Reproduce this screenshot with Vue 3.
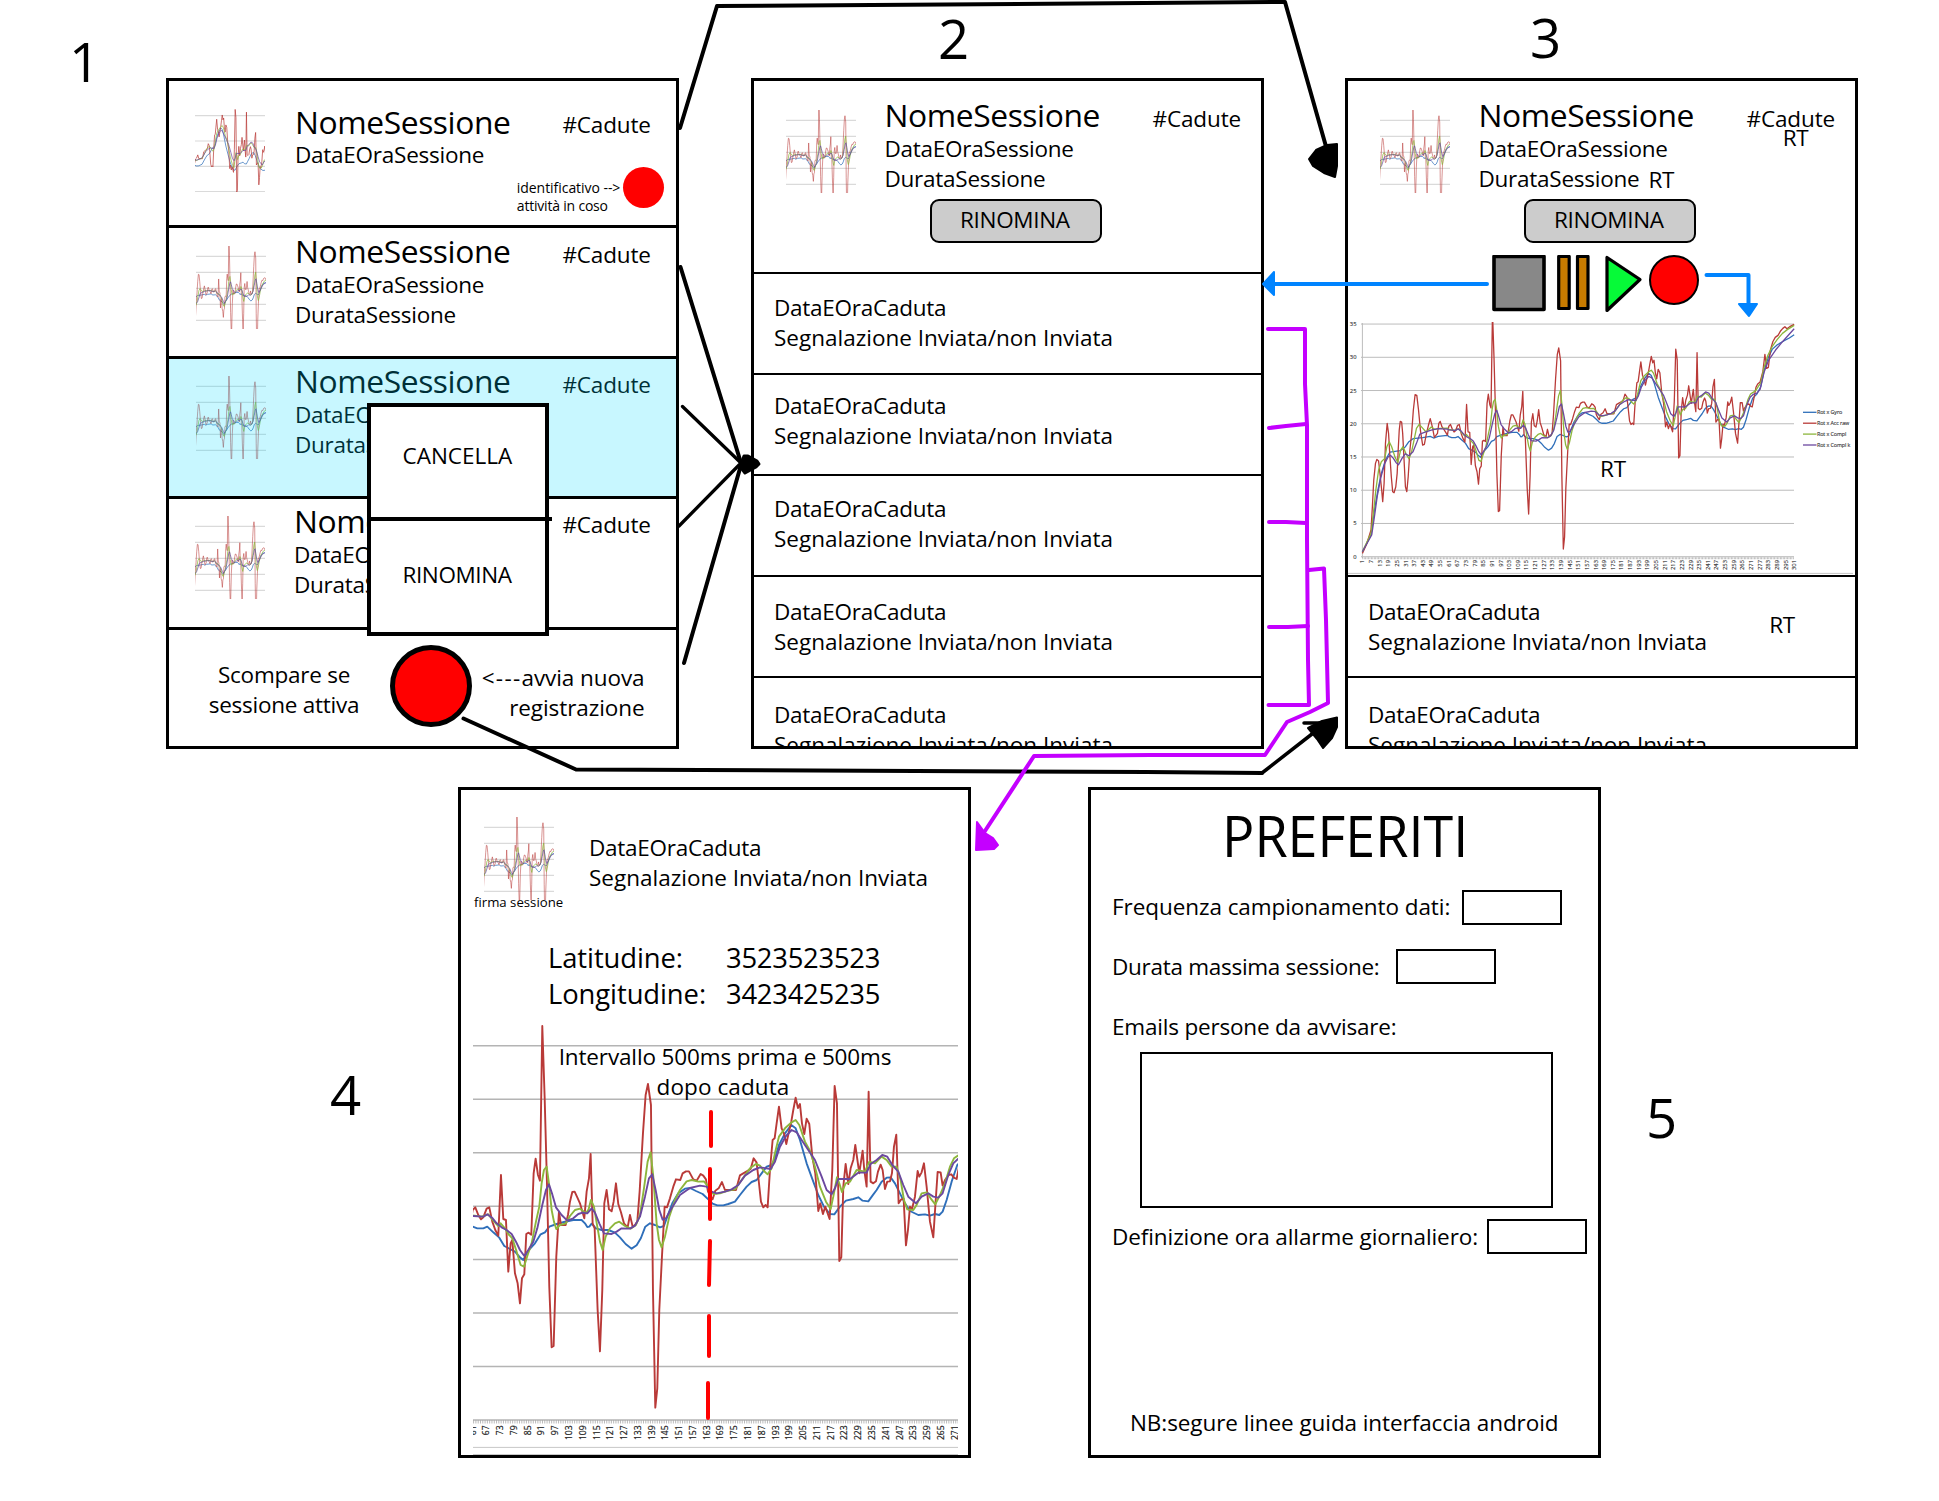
<script setup>
// Points traced on the overview plot (left and right ends of the recording).
const HEAD = {
  gyro: '65,755 90,705 100,630 110,570 120,520 132,480 145,456 175,452 190,440 200,425 212,416 240,413 262,409 272,414 285,409 312,406',
  acc: '65,760 78,730 90,690 94,620 98,540 103,490 107,478 112,483 116,520 121,570 124,605 128,550 132,430 137,370 141,400 145,470 149,530 153,575 157,578 162,560 166,520 169,450 172,390 175,364 179,366 182,400 186,480 190,560 194,575 198,530 203,450 208,400 213,330 218,284 223,286 228,330 234,395 240,435 245,433 251,400 257,375 262,356 268,380 274,412 283,400 287,370 291,364 296,380 303,390 312,405',
  compl: '65,755 90,700 97,640 104,570 112,510 120,485 130,475 136,440 143,425 150,440 160,472 168,487 176,450 183,440 192,462 200,476 208,455 215,420 222,385 230,373 238,382 250,396 265,381 275,388 290,385 312,384',
  complk: '65,755 92,705 100,650 108,590 118,535 130,490 140,470 147,466 155,475 163,488 170,494 180,475 190,461 200,467 212,455 222,430 232,402 245,397 265,390 285,386 312,387'
}
const TAIL = {
  gyro: '1210,283 1222,260 1232,210 1243,175 1255,148 1270,134 1290,122 1305,114 1319,104',
  acc: '1203,290 1208,262 1213,252 1220,246 1228,215 1234,163 1239,205 1244,202 1250,150 1257,125 1264,112 1272,106 1280,92 1286,85 1292,80 1298,86 1306,80 1319,73',
  compl: '1208,270 1222,248 1232,200 1243,165 1255,140 1270,118 1285,100 1300,88 1319,76',
  complk: '1210,280 1220,268 1232,215 1245,180 1265,150 1285,125 1300,108 1319,86'
}
// Points traced on the detail plot, first and second half.
const MID_A = {
  gyro: '38,650 52,655 70,655 82,650 100,667 118,683 133,708 150,717 165,725 178,740 190,750 205,722 225,700 242,673 255,667 268,650 290,642 312,636 340,630 365,630 375,640 382,651 388,650 395,641 408,655 425,660 445,660 465,668 480,682 497,702 515,716 530,706 543,684 556,650 570,640 585,645 600,652 612,648 622,620 637,580 655,550 675,536 690,534 708,543 728,552 745,568 758,581 772,586',
  acc: '38,600 46,592 55,615 63,628 70,622 80,596 88,592 97,635 106,660 115,677 123,495 130,627 138,630 145,785 152,700 157,690 165,790 173,820 180,880 186,805 193,793 199,672 206,668 214,674 221,490 227,446 234,495 240,512 247,48 254,260 261,520 268,830 275,1012 281,1008 289,740 297,605 303,645 317,645 324,615 330,575 337,546 344,545 352,562 360,580 373,625 380,545 387,505 392,432 398,640 404,655 413,900 420,1024 427,840 433,580 440,540 447,598 455,604 461,575 468,520 475,582 483,607 492,640 503,652 510,615 518,650 525,645 532,635 539,545 549,370 557,255 564,222 573,285 579,840 586,1193 592,1135 598,900 606,740 614,590 621,592 630,565 640,530 648,508 661,510 668,490 678,484 687,484 700,508 710,512 722,492',
  compl: '38,616 65,620 85,613 100,632 115,648 122,640 135,655 145,672 157,685 170,725 182,765 192,770 203,735 215,700 228,635 238,590 245,520 252,480 260,470 267,520 275,600 282,635 289,657 300,645 318,640 330,618 345,600 360,596 378,610 386,598 393,570 402,590 412,650 420,695 428,720 437,680 450,655 465,640 478,635 495,648 512,656 528,645 540,615 552,535 563,455 572,427 580,500 590,640 597,690 605,712 615,680 628,620 645,570 660,540 680,514 695,510 715,515 732,514 745,530 760,552',
  complk: '38,618 70,620 82,613 98,625 110,640 125,652 140,660 155,672 168,695 180,720 193,738 205,720 220,695 232,655 247,585 258,540 267,523 276,550 288,592 305,615 322,632 340,625 355,612 368,608 382,610 395,595 405,608 418,640 432,670 455,672 470,665 485,655 510,656 525,647 540,620 555,560 567,505 577,493 587,540 598,600 608,629 618,625 635,595 660,555 690,534 720,527 740,530 755,545 770,550'
}
const MID_B = {
  gyro: '70,586 85,582 105,575 120,555 140,530 155,516 170,510 185,490 200,470 215,465 225,445 237,405 255,370 274,345 287,355 300,390 320,460 340,515 355,555 372,590 390,612 403,613 420,590 438,572 460,567 475,562 488,572 505,574 518,556 530,540 545,515 560,503 572,502 585,520 600,550 615,580 630,603 655,615 675,613 690,617 705,612 718,615 728,605 740,570 755,515 772,465',
  acc: '10,497 18,508 24,545 32,560 38,568 46,542 56,535 66,516 75,540 108,540 120,496 130,490 152,477 161,445 170,458 176,510 183,575 190,592 197,585 203,592 210,480 218,390 224,385 230,340 237,290 245,355 252,370 259,402 267,365 274,335 280,300 287,263 294,294 300,282 306,340 313,372 320,326 328,342 337,440 346,490 355,603 361,580 369,612 376,590 389,627 397,480 404,228 411,280 418,753 424,742 430,530 437,462 445,522 452,475 460,450 466,405 478,490 488,422 493,480 500,530 506,245 512,515 520,520 528,514 534,485 542,464 548,480 555,537 562,515 570,514 576,490 582,410 589,374 596,580 604,568 611,566 618,706 624,660 630,590 636,598 645,560 653,483 658,500 665,487 672,460 680,530 690,635 700,682 706,590 713,486 722,487 728,527 735,510 746,495 754,493 762,503 770,507',
  compl: '60,550 80,543 105,538 125,510 150,475 168,462 180,467 192,483 203,493 215,475 226,425 237,380 255,355 275,337 287,330 298,345 315,395 330,422 345,470 360,530 378,575 392,597 400,560 411,502 418,520 426,546 437,520 450,515 470,480 495,485 508,455 525,460 545,440 560,450 575,470 590,470 602,510 612,570 622,598 640,600 650,585 665,550 680,547 692,565 706,583 720,555 735,520 750,470 762,445 774,437',
  complk: '75,545 95,538 115,525 135,497 160,480 180,472 212,477 225,455 240,410 258,378 275,360 290,367 305,390 325,420 345,450 365,500 380,540 395,553 405,535 415,507 450,507 475,488 500,488 512,462 530,450 547,435 562,440 577,465 595,485 610,525 625,560 648,580 665,560 685,550 700,560 715,563 728,550 745,495 760,460 774,447'
}
const split = s => s.split(' ').map(p => p.split(',').map(Number))
const fromOverview = ([x, y]) => [1 + (x - 65) / 4.18, (770 - y) / 19.94]
const fromDetail = ([x, y]) => [67 + (x - 79) / 6.888, (1230 - y) / 32.08]

const META = [
  { key: 'gyro', color: '#2f6fba', label: 'Rot x Gyro' },
  { key: 'acc', color: '#b93a38', label: 'Rot x Acc raw' },
  { key: 'compl', color: '#8db63c', label: 'Rot x Compl' },
  { key: 'complk', color: '#6b489f', label: 'Rot x Compl k' }
]
const series = META.map(m => ({
  ...m,
  data: [
    ...split(HEAD[m.key]).map(fromOverview),
    ...split(MID_A[m.key]).map(fromDetail),
    ...split(MID_B[m.key]).map(([x, y]) => fromDetail([x + 720, y])),
    ...split(TAIL[m.key]).map(fromOverview)
  ]
}))
const line = (data, x0, sx, y30, sy) =>
  data.map(([i, v]) => `${((i - x0) * sx).toFixed(2)},${(y30 + (30 - v) * sy).toFixed(2)}`).join(' ')
const plot = (...a) => series.map(s => ({ ...s, points: line(s.data, ...a) }))

const liveThumb = { lines: plot(166, 0.762, 6.7, 5.06), grid: [6.7, 32, 57.3, 82.6] }
const doneThumb = { lines: plot(33.4, 0.567, 10.3, 3.2), grid: [10.3, 26.3, 42.3, 58.3, 74.3] }

// Overview: origin (14.4, 243.7), 1.4393px per sample, 6.647px per unit.
const overview = plot(-9.0, 1.4393, 44.3, 6.647)
const overviewTicks = [0, 5, 10, 15, 20, 25, 30, 35].map(v => ({ v, y: 243.7 - v * 6.647 }))
const overviewX = Array.from({ length: 51 }, (_, i) => ({ n: 1 + i * 6, x: 14.4 + i * 8.636 }))

// Detail: sample 67 at x = 13.3, 2.296px per sample, 10.693px per unit.
const detail = plot(61.21, 2.296, 79.2, 10.693)
const detailGrid = [0, 5, 10, 15, 20, 25, 30, 35].map(v => 400 - v * 10.693)
const detailX = Array.from({ length: 36 }, (_, i) => ({ n: 61 + i * 6, x: (i - 1) * 13.776 + 13.3 }))
const detailMinor = Array.from({ length: 212 }, (_, i) => i * 2.296 + 0.6)

const sessions = [
  { live: true, cls: 'first', dur: false },
  { live: false, cls: 'second', dur: true },
  { live: false, cls: 'third', dur: true },
  { live: false, cls: 'fourth', dur: true }
]
const falls = [19, 16, 18, 20, 22]
</script>

<template>
  <main class="board">
    <b class="num n1">1</b>
    <b class="num n2">2</b>
    <b class="num n3">3</b>
    <b class="num n4">4</b>
    <b class="num n5">5</b>

    <section class="screen s1">
      <div v-for="s in sessions" :key="s.cls" class="session" :class="s.cls">
        <svg class="thumb" :class="{ live: s.live }" width="70" height="83" viewBox="0 0 70 83">
          <path v-for="g in (s.live ? liveThumb : doneThumb).grid" :key="g" :d="`M0 ${g}H70`" class="tgrid" />
          <polyline v-for="l in (s.live ? liveThumb : doneThumb).lines" :key="l.key" :points="l.points" :stroke="l.color" :class="l.key" />
        </svg>
        <div class="info">
          <h2>NomeSessione</h2>
          <p>DataEOraSessione</p>
          <p v-if="s.dur">DurataSessione</p>
        </div>
        <div class="side">
          <span class="falls">#Cadute</span>
          <div v-if="s.live" class="activity">
            <p class="note">identificativo --&gt;<br /><span>attività in coso</span></p>
            <i class="dot"></i>
          </div>
        </div>
      </div>
      <footer class="recbar">
        <p class="hint left">Scompare se<br />sessione attiva</p>
        <i class="rec"></i>
        <p class="hint right"><span class="dash">&lt;---</span>avvia nuova<br />registrazione</p>
      </footer>
      <div class="menu">
        <div class="opt cut">CANCELLA</div>
        <div class="opt">RINOMINA</div>
      </div>
    </section>

    <section v-for="n in [2, 3]" :key="n" class="screen" :class="'s' + n">
      <div class="top">
        <div class="head">
          <svg class="thumb" width="70" height="83" viewBox="0 0 70 83">
            <path v-for="g in doneThumb.grid" :key="g" :d="`M0 ${g}H70`" class="tgrid" />
            <polyline v-for="l in doneThumb.lines" :key="l.key" :points="l.points" :stroke="l.color" :class="l.key" />
          </svg>
          <div class="info">
            <h2>NomeSessione</h2>
            <p>DataEOraSessione</p>
            <p>DurataSessione<span v-if="n === 3" class="rt-inline">RT</span></p>
          </div>
          <div class="side">
            <span class="falls">#Cadute</span>
            <span v-if="n === 3" class="rt-under">RT</span>
          </div>
        </div>
        <div class="btn">RINOMINA</div>
        <template v-if="n === 3">
          <svg class="controls" width="507" height="58" viewBox="0 0 507 58" stroke="#000" stroke-linejoin="round">
            <rect x="146" y="1.5" width="50" height="53" fill="#888" stroke-width="3.6" />
            <rect x="210.7" y="1.5" width="10.5" height="52" fill="#c77b00" stroke-width="3.2" />
            <rect x="229.5" y="1.5" width="10.5" height="52" fill="#c77b00" stroke-width="3.2" />
            <path d="M259 2.5V55.5L292 24.5Z" fill="#06fa38" stroke-width="3.2" />
            <circle cx="326" cy="25" r="24" fill="#f00" stroke-width="2" />
          </svg>
          <svg class="overview" width="507" height="262" viewBox="0 0 507 262">
            <clipPath id="plot-area"><rect x="10" y="9" width="440" height="240" /></clipPath>
            <path v-for="t in overviewTicks" :key="t.v" :d="`M13 ${t.y}H446`" stroke="#bcbcbc" />
            <path d="M14.4 10V245" stroke="#bcbcbc" />
            <path d="M14.4 245.2H446" stroke="#aaa" stroke-width="2" stroke-dasharray=".7 .74" />
            <text v-for="t in overviewTicks" :key="t.v" x="8.5" :y="t.y + 2" text-anchor="end" class="tiny">{{ t.v }}</text>
            <text v-for="t in overviewX" :key="t.n" text-anchor="end" class="tiny" :transform="`translate(${t.x + 2} 247) rotate(-90)`">{{ t.n }}</text>
            <g clip-path="url(#plot-area)">
              <polyline v-for="l in overview" :key="l.key" :points="l.points" :stroke="l.color" fill="none" stroke-width="1.3" stroke-linejoin="round" />
            </g>
            <g v-for="(l, i) in overview" :key="l.label">
              <path :d="`M455 ${99.3 + i * 10.9}h13.500`" :stroke="l.color" stroke-width="1.3" />
              <text x="469" :y="101.3 + i * 10.9" class="tiny key">{{ l.label }}</text>
            </g>
            <path d="M0 260.4H505" stroke="#c4c4c4" />
            <text x="252" y="164" class="rt">RT</text>
          </svg>
        </template>
      </div>
      <div v-for="i in n === 2 ? [0, 1, 2, 3, 4] : [3, 4]" :key="i" class="fall" :style="{ paddingTop: falls[i] + 'px' }">
        <p class="desc">DataEOraCaduta<br /><span>Segnalazione Inviata/non Inviata</span></p>
        <span v-if="n === 3 && i === 3" class="rt-side">RT</span>
      </div>
    </section>

    <section class="screen s4">
      <div class="head4">
        <div class="sign">
          <svg class="thumb" width="70" height="83" viewBox="0 0 70 83">
            <path v-for="g in doneThumb.grid" :key="g" :d="`M0 ${g}H70`" class="tgrid" />
            <polyline v-for="l in doneThumb.lines" :key="l.key" :points="l.points" :stroke="l.color" :class="l.key" />
          </svg>
          <small>firma sessione</small>
        </div>
        <p class="desc">DataEOraCaduta<br /><span>Segnalazione Inviata/non Inviata</span></p>
      </div>
      <dl class="coords">
        <dt>Latitudine:</dt>
        <dd>3523523523</dd>
        <dt>Longitudine:</dt>
        <dd>3423425235</dd>
      </dl>
      <div class="plot4">
        <svg width="485" height="436" viewBox="0 0 485 436">
          <path v-for="g in detailGrid" :key="g" :d="`M0 ${g}H485`" stroke="#b4b4b4" stroke-width="1.5" />
          <path v-for="m in detailMinor" :key="m" :d="`M${m} 400v3.5`" stroke="#aaa" stroke-width=".8" />
          <text v-for="t in detailX" :key="t.n" text-anchor="end" class="axis" :transform="`translate(${t.x + 3} 405.5) rotate(-90)`">{{ t.n }}</text>
          <polyline v-for="l in detail" :key="l.key" :points="l.points" :stroke="l.color" fill="none" stroke-width="1.9" stroke-linejoin="round" />
          <path d="M0 427.4H485M0 434.5H485" stroke="#c8c8c8" />
          <path d="M238 92V126M237 149V199M237 221L236 265M236 296V336M235 363V398" stroke="#f00" stroke-width="4" stroke-linecap="round" />
        </svg>
        <p class="caption">Intervallo 500ms prima e 500ms<br /><span>dopo caduta</span></p>
      </div>
    </section>

    <section class="screen s5">
      <h1>PREFERITI</h1>
      <label class="field f1"><span>Frequenza campionamento dati:</span><i></i></label>
      <label class="field f2"><span>Durata massima sessione:</span><i></i></label>
      <label class="field f3"><span>Emails persone da avvisare:</span></label>
      <div class="area"></div>
      <label class="field f4"><span>Definizione ora allarme giornaliero:</span><i></i></label>
      <p class="nb">NB:segure linee guida interfaccia android</p>
    </section>

    <svg class="wires" width="1939" height="1501" viewBox="0 0 1939 1501" fill="none" stroke-width="4" stroke-linecap="round" stroke-linejoin="round">
      <g stroke="#000">
        <path d="M680 128L717 6L1285 2L1327 150" />
        <path d="M1309 159L1316 150L1327 145L1337 144V166L1335 177L1324 173L1313 166Z" fill="#000" stroke-width="2" />
        <path d="M680.500 267L741 463M684 663L741 465" />
        <path d="M682.500 406.500L741 463L679 526" stroke-width="3.300" />
        <path d="M741 464L744 456L748 456L757 461L759 464L756 467L745 473L742 469Z" fill="#000" stroke-width="3" />
        <path d="M463.500 718.500L576 769.500L1146 772L1262 773" />
        <path d="M1262 773L1312 734M1304 723H1320" stroke-width="3.500" />
        <path d="M1308 728L1322 721L1337 717.500V727L1332 738L1323 748L1317 739Z" fill="#000" stroke-width="2" />
      </g>
      <g stroke="#c400ff">
        <path d="M1268 329H1305V384L1307 425V540L1308 660L1309 705H1268.500" />
        <path d="M1269 428L1286 426L1306 424M1269 522H1286L1306 523M1269 627H1288L1308 626" />
        <path d="M1309 570L1324 568.500L1326 620L1328 703L1310 712L1287 722L1265 755L1150 755L1034 756L983 834" />
        <path d="M977 822L985 833L993 838L998 845L994 849L976 850Z" fill="#c400ff" stroke-width="2" />
      </g>
      <g stroke="#0084ff">
        <path d="M1487 284H1272M1706.500 275H1748.500V305" />
        <path d="M1263 284L1274 272V295ZM1739 304H1757L1749 316Z" fill="#0084ff" stroke-width="2" />
      </g>
    </svg>
  </main>
</template>

<style>
body {
  margin: 0;
  background: #fff;
}
</style>

<style scoped>
.board {
  position: relative;
  width: 1939px;
  height: 1501px;
  overflow: hidden;
  background: #fff;
  color: #000;
  font: 22.5px/30px "Open Sans", "Noto Sans", sans-serif;
  letter-spacing: -0.25px;
  white-space: nowrap;
}
p, h1, h2, dl, dd, dt {
  margin: 0;
  font-weight: 400;
}
i, b {
  font-style: normal;
  font-weight: 400;
}
.num {
  position: absolute;
  font-size: 54.5px;
  line-height: 60px;
}
.n1 { left: 69px; top: 31px; }
.n2 { left: 938px; top: 8px; }
.n3 { left: 1530px; top: 7px; }
.n4 { left: 330px; top: 1064px; }
.n5 { left: 1646px; top: 1087px; }

.screen {
  position: absolute;
  box-sizing: border-box;
  width: 513px;
  height: 671px;
  border: 3px solid #000;
  background: #fff;
}
.s1 { left: 166px; top: 78px; }
.s2 { left: 751px; top: 78px; overflow: hidden; }
.s3 { left: 1345px; top: 78px; overflow: hidden; }
.s4 { left: 458px; top: 787px; }
.s5 { left: 1088px; top: 787px; }

.thumb {
  display: block;
  flex: none;
  fill: none;
  overflow: hidden;
}
.tgrid { stroke: #dadada; stroke-width: 1.2; }
.thumb polyline { opacity: 0.8; stroke-width: 0.9; }
.thumb .acc { opacity: 0.6; }
.thumb.live .acc { opacity: 0.8; }

h2 {
  font-size: 31.8px;
  line-height: 37px;
  letter-spacing: -0.42px;
}
.session {
  position: relative;
  display: flex;
  align-items: flex-start;
  box-sizing: border-box;
  border-bottom: 3px solid #000;
}
.session .thumb { margin: 18px 29px 0 27px; }
.session .info { padding-top: 4px; }
.info p { position: relative; top: 0.6px; }
.side {
  display: flex;
  flex-direction: column;
  align-items: flex-end;
  margin-left: auto;
}
.falls { letter-spacing: -0.15px; }
.session .side { margin-right: 11.7px; padding-top: 12px; }
.session .falls { margin-right: 13.500px; }
.first { height: 147px; }
.first .thumb { margin: 28px 30px 0 26px; }
.first .info { padding-top: 21.5px; flex: none; width: 200px; }
.first .side { padding-top: 29px; }
.second { height: 131px; }
.third { height: 140px; }
.fourth { height: 131px; left: -1px; width: 508px; }
.third .thumb, .fourth .thumb { margin-top: 17px; }
.third .info, .fourth .info { padding-top: 3.2px; }
.third .side, .fourth .side { padding-top: 11px; }
.third::after {
  content: "";
  position: absolute;
  inset: 0;
  background: rgba(0, 218, 255, 0.216);
}
.activity {
  display: flex;
  align-items: flex-start;
  margin-top: 27px;
}
.note {
  margin: 12.4px 3px 0 0;
  font-size: 14px;
  line-height: 18px;
  letter-spacing: -0.05px;
}
.note span { letter-spacing: -0.2px; }
.dot {
  width: 41px;
  height: 41px;
  border-radius: 50%;
  background: #f00;
}
.recbar {
  display: flex;
  align-items: flex-start;
}
.hint.left {
  width: 151px;
  margin: 30px 30px 0 39.500px;
  text-align: center;
}
.hint.right {
  margin: 33px 31.500px 0 auto;
  text-align: right;
  letter-spacing: -0.08px;
}
.dash { letter-spacing: 1.3px; }
.rec {
  box-sizing: border-box;
  width: 82px;
  height: 82px;
  margin-top: 15px;
  border: 5px solid #000;
  border-radius: 50%;
  background: #f00;
}
.menu {
  position: absolute;
  left: 198px;
  top: 322px;
  box-sizing: border-box;
  width: 182px;
  height: 233px;
  border: 4px solid #000;
  background: #fff;
}
.opt {
  height: 111px;
  line-height: 107px;
  padding-left: 31.500px;
  letter-spacing: -0.4px;
}
.opt.cut {
  width: 149.500px;
  height: 110px;
  line-height: 98px;
  letter-spacing: 0;
  border-bottom: 4px solid #000;
}

.top {
  box-sizing: border-box;
  border-bottom: 2px solid #000;
}
.s2 .top { height: 193px; }
.s3 .top { height: 496px; }
.head {
  display: flex;
  align-items: flex-start;
  height: 118px;
}
.head .thumb { margin: 29px 28.5px 0 32px; }
.head .info { padding-top: 15px; }
.head .side { padding: 23px 20px 0 0; }
.rt-inline {
  position: relative;
  top: 1px;
  margin-left: 9px;
}
.rt-under { margin: -11px 26.500px 0 0; }
.btn {
  box-sizing: border-box;
  width: 172px;
  height: 44px;
  margin-left: 176px;
  padding-left: 28px;
  border: 2px solid #000;
  border-radius: 9px;
  background: #ccc;
  line-height: 37px;
  letter-spacing: -0.32px;
}
.controls { display: block; margin-top: 12px; }
.overview { display: block; }
.tiny { font-size: 5.8px; letter-spacing: 0; fill: #333; stroke: #333; stroke-width: 0.12px; }
.tiny.key { font-size: 5.4px; letter-spacing: -0.1px; }
.axis { font-size: 8.6px; letter-spacing: -0.1px; fill: #222; stroke: #222; stroke-width: 0.2px; }
.rt { font-size: 22.5px; }
.fall {
  display: flex;
  align-items: flex-start;
  box-sizing: border-box;
  height: 101px;
  padding-left: 20px;
  border-bottom: 2px solid #000;
}
.desc span { letter-spacing: 0; }
.rt-side { margin: 13px 60px 0 auto; }

.head4 {
  display: flex;
  align-items: flex-start;
  height: 131px;
}
.sign { width: 88px; margin: 27px 24.5px 0 13px; }
.sign .thumb { margin-left: 10px; }
.sign small {
  display: block;
  margin-top: -7.500px;
  font-size: 13.2px;
  line-height: 18px;
  letter-spacing: 0;
}
.head4 .desc { padding-top: 43px; margin-left: 2.500px; }
.coords {
  display: grid;
  grid-template-columns: 178px auto;
  padding-left: 87px;
  margin-top: 19px;
  font-size: 27.4px;
  line-height: 36px;
  letter-spacing: -0.08px;
}
.coords dd { letter-spacing: -0.25px; }
.plot4 {
  display: grid;
  margin: 8px 0 0 12px;
}
.plot4 svg, .caption { grid-area: 1 / 1; }
.caption { margin: 22px 0 0 3px; width: 498px; text-align: center; letter-spacing: -0.14px; }
.caption span { position: relative; left: -2px; letter-spacing: 0.1px; }

.s5 { display: flex; flex-direction: column; align-items: flex-start; }
h1 {
  width: 262px;
  margin: 9.500px 0 0 131px;
  font-size: 57.4px;
  line-height: 70px;
  letter-spacing: 0;
  transform: scaleX(0.938);
  transform-origin: left;
}
.field { display: flex; align-items: center; height: 35px; margin-left: 21px; }
.field i {
  box-sizing: border-box;
  width: 100px;
  height: 35px;
  border: 2px solid #000;
}
.f1 { margin-top: 20.500px; letter-spacing: -0.07px; }
.f1 span { width: 350px; position: relative; top: -1px; }
.f2 { margin-top: 24px; letter-spacing: -0.28px; }
.f2 span { width: 284px; }
.f3 { margin-top: 25px; letter-spacing: -0.19px; }
.f4 { margin-top: 11px; letter-spacing: -0.09px; }
.f4 span { width: 375px; }
.area {
  box-sizing: border-box;
  width: 413px;
  height: 156px;
  margin: 8px 0 0 49px;
  border: 2px solid #000;
}
.nb { margin: 154px 0 0 39px; letter-spacing: -0.08px; }

.wires {
  position: absolute;
  left: 0;
  top: 0;
}
</style>
